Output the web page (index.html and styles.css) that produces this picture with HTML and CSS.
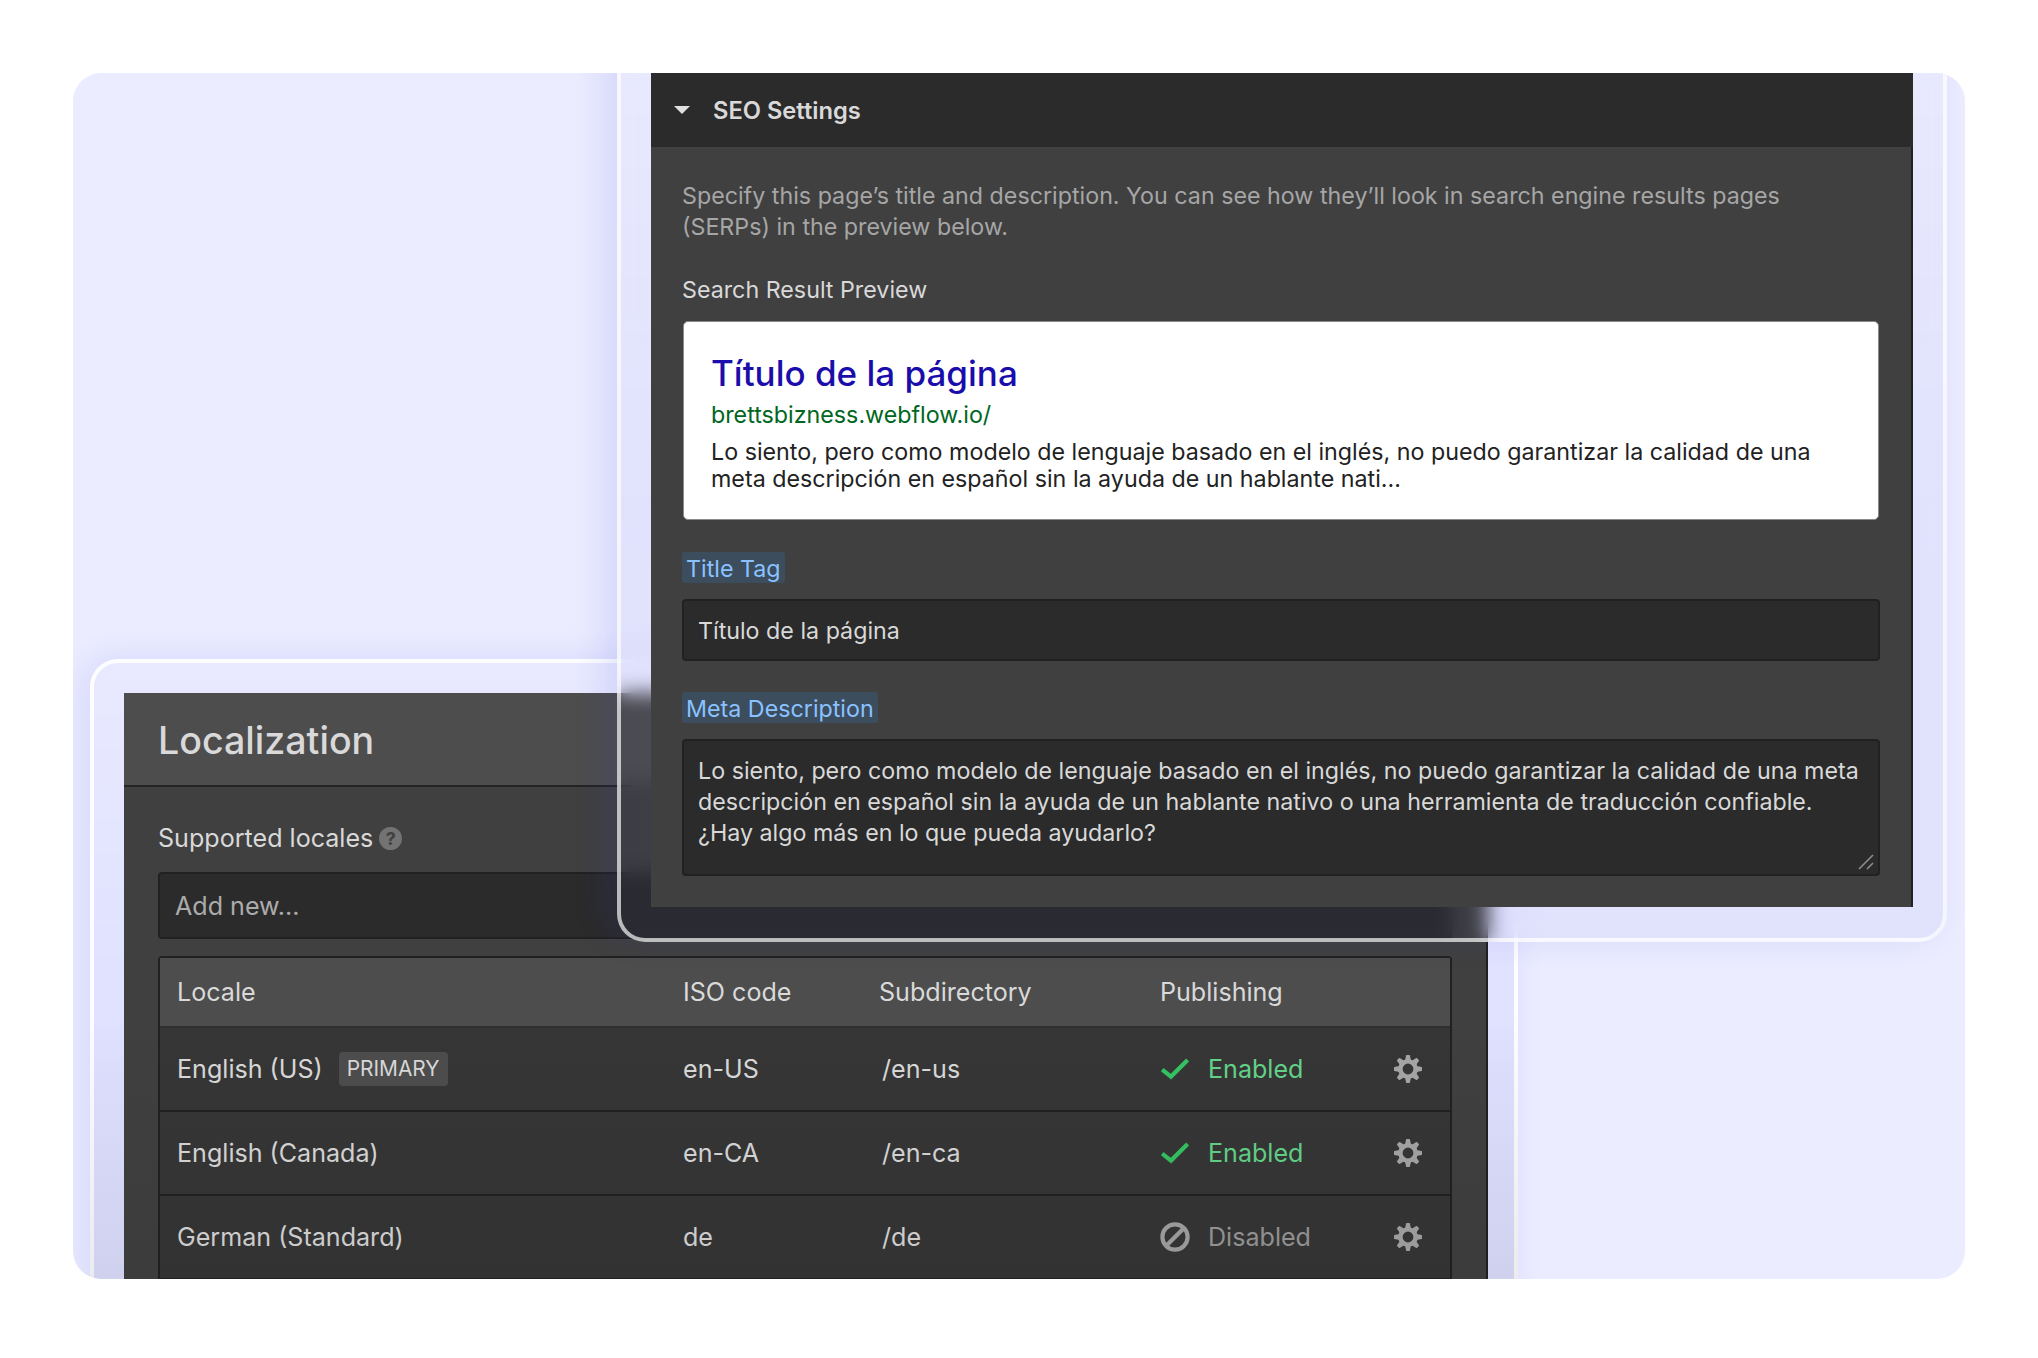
FILE: index.html
```html
<!DOCTYPE html>
<html lang="en">
<head>
    <meta charset="UTF-8">
    <title>Localization</title>
    <link rel="stylesheet" href="styles.css">
</head>
<body>
    <svg width="0" height="0" class="sprite">
        <symbol id="check" viewBox="0 0 30 30">
            <path d="M2.2 15.6 L11 22.6 L27.6 6" fill="none" stroke="#35c463" stroke-width="4.2"/>
        </symbol>
        <symbol id="ban" viewBox="0 0 30 30">
            <circle cx="15" cy="15" r="12.6" fill="none" stroke="#a3a3a3" stroke-width="4.2"/>
            <path d="M6.5 23.5 L23.5 6.5" stroke="#a3a3a3" stroke-width="4.2"/>
        </symbol>
        <symbol id="gear" viewBox="-14 -14 28 28">
            <circle r="7.6" fill="none" stroke="#a6a6a6" stroke-width="4.4"/>
            <g id="teeth" fill="#a6a6a6">
                <path id="tooth" d="M-3 -8.5 L-1.9 -13.6 Q-1.8 -14 -1.4 -14 L1.4 -14 Q1.8 -14 1.9 -13.6 L3 -8.5 Z"/>
                <use href="#tooth" transform="rotate(45)"/>
                <use href="#tooth" transform="rotate(90)"/>
                <use href="#tooth" transform="rotate(135)"/>
                <use href="#tooth" transform="rotate(180)"/>
                <use href="#tooth" transform="rotate(225)"/>
                <use href="#tooth" transform="rotate(270)"/>
                <use href="#tooth" transform="rotate(315)"/>
            </g>
        </symbol>
    </svg>

    <div class="canvas">
        <!-- Localization window -->
        <div class="glass glass-locales">
            <div class="panel locales">
                <h1>Localization</h1>
                <div class="locales-body">
                    <div class="label">Supported locales <span class="help">?</span></div>
                    <div class="add-new">Add new...</div>
                    <div class="table">
                        <div class="row head">
                            <span>Locale</span>
                            <span>ISO code</span>
                            <span>Subdirectory</span>
                            <span>Publishing</span>
                        </div>
                        <div class="row">
                            <span class="name">English (US) <span class="badge">PRIMARY</span></span>
                            <span>en-US</span>
                            <span class="dir">/en-us</span>
                            <span class="status on"><svg><use href="#check"/></svg>Enabled</span>
                            <svg class="gear"><use href="#gear"/></svg>
                        </div>
                        <div class="row">
                            <span class="name">English (Canada)</span>
                            <span>en-CA</span>
                            <span class="dir">/en-ca</span>
                            <span class="status on"><svg><use href="#check"/></svg>Enabled</span>
                            <svg class="gear"><use href="#gear"/></svg>
                        </div>
                        <div class="row">
                            <span class="name">German (Standard)</span>
                            <span>de</span>
                            <span class="dir">/de</span>
                            <span class="status off"><svg><use href="#ban"/></svg>Disabled</span>
                            <svg class="gear"><use href="#gear"/></svg>
                        </div>
                    </div>
                </div>
            </div>
        </div>

        <!-- SEO settings window -->
        <div class="glass glass-seo">
            <div class="panel seo">
                <div class="seo-head">
                    <svg class="arrow" viewBox="0 0 16 8"><path d="M0 0H16L8 8Z" fill="#e0e0e0"/></svg>
                    <h2>SEO Settings</h2>
                </div>
                <div class="seo-body">
                    <p class="intro">Specify this page’s title and description. You can see how they’ll look in search engine results pages<br>(SERPs) in the preview below.</p>
                    <div class="preview-label">Search Result Preview</div>
                    <div class="preview">
                        <div class="preview-title">Título de la página</div>
                        <div class="preview-url">brettsbizness.webflow.io/</div>
                        <div class="preview-text">Lo siento, pero como modelo de lenguaje basado en el inglés, no puedo garantizar la calidad de una<br>meta descripción en español sin la ayuda de un hablante nati...</div>
                    </div>
                    <div class="tag">Title Tag</div>
                    <div class="field">Título de la página</div>
                    <div class="tag">Meta Description</div>
                    <div class="field area">Lo siento, pero como modelo de lenguaje basado en el inglés, no puedo garantizar la calidad de una meta<br>descripción en español sin la ayuda de un hablante nativo o una herramienta de traducción confiable.<br>¿Hay algo más en lo que pueda ayudarlo?
                        <svg class="grip" viewBox="0 0 16 16"><path d="M1 15L15 1M9 15L15 9" stroke="#8c8c8c" stroke-width="1.6"/></svg>
                    </div>
                </div>
            </div>
        </div>
    </div>
</body>
</html>
```
FILE: styles.css
```css
* {
    box-sizing: border-box;
}
body {
    margin: 0;
    padding: 73px;
    background: #fff;
    font-family: Inter, "Liberation Sans", sans-serif;
    color: #d9d9d9;
}
h1, h2, p {
    margin: 0;
    font-weight: 400;
}
.sprite {
    position: absolute;
}
.canvas {
    position: relative;
    width: 1892px;
    height: 1206px;
    overflow: hidden;
    border-radius: 28px;
    background: #ebecff;
}

/* glass frames round the windows */
.glass {
    position: absolute;
    border: 4px solid rgba(255, 255, 255, 0.9);
    border-radius: 28px;
}
.glass-locales {
    left: 17px;
    top: 586px;
    width: 1428px;
    height: 700px;
    padding: 30px 26px 0 30px;
    background: linear-gradient(rgba(40, 40, 255, 0.01), rgba(40, 40, 255, 0.06) 60%);
    box-shadow: -8px 0 32px rgba(50, 60, 230, 0.11);
}
.glass-locales::after {
    content: "";
    position: absolute;
    inset: 50% -4px 0 -4px;
    background: linear-gradient(transparent, rgba(0, 0, 0, 0.09));
}
.glass-seo {
    left: 544px;
    top: -44px;
    width: 1330px;
    height: 913px;
    padding: 40px 30px 0 30px;
    border-color: rgba(255, 255, 255, 0.68);
    background: linear-gradient(rgba(40, 40, 200, 0.01), rgba(40, 40, 200, 0.05) 60%);
    backdrop-filter: blur(10px);
    box-shadow: -12px -4px 34px rgba(50, 60, 210, 0.12);
}
.panel {
    background: #404040;
    border-right: 2px solid #212121;
}

/* localization */
.locales {
    height: 640px;
    font-size: 25.1px;
}
.locales h1 {
    height: 94px;
    padding: 2px 0 0 34px;
    border-bottom: 2px solid #242424;
    background: #4d4d4d;
    font-size: 37.6px;
    font-weight: 500;
    line-height: 92px;
}
.locales-body {
    padding: 35px 34px 0;
}
.label {
    display: flex;
    align-items: center;
    height: 32px;
}
.help {
    width: 23px;
    height: 23px;
    margin-left: 6px;
    border-radius: 50%;
    background: #737373;
    color: #404040;
    font-size: 18px;
    font-weight: 700;
    line-height: 23px;
    text-align: center;
}
.add-new {
    height: 67px;
    margin: 18px 0 17px;
    padding-left: 15px;
    border: 2px solid #212121;
    border-radius: 4px;
    background: #2b2b2b;
    color: #ababab;
    line-height: 64px;
}
.table {
    border: 2px solid #212121;
    border-radius: 4px 4px 0 0;
    background: #363636;
}
.row {
    display: grid;
    grid-template-columns: 506px 196px 281px 1fr 28px;
    align-items: center;
    height: 84px;
    padding: 0 28px 0 17px;
    border-bottom: 2px solid #212121;
}
.row.head {
    height: 70px;
    padding-bottom: 1px;
    border-color: #303030;
    background: #4d4d4d;
    grid-template-columns: 506px 196px 281px 1fr;
}
.row:last-child {
    height: 82px;
    border-bottom: 0;
}
.name {
    display: flex;
    align-items: center;
}
.badge {
    height: 34px;
    margin-left: 16px;
    padding: 0 8px;
    border-radius: 4px;
    background: #4d4d4d;
    font-size: 20.9px;
    line-height: 34px;
}
.dir {
    padding-left: 3px;
}
.status {
    display: flex;
    align-items: center;
    gap: 18px;
}
.status svg {
    width: 30px;
    height: 30px;
}
.on {
    color: #63d489;
}
.off {
    color: #999;
}
.gear {
    width: 28px;
    height: 28px;
}

/* seo settings */
.seo {
    height: 834px;
    font-size: 23.25px;
    line-height: 31px;
}
.seo-head {
    display: flex;
    align-items: center;
    height: 74px;
    margin-right: -2px;
    padding-left: 23px;
    background: #2b2b2b;
}
.arrow {
    width: 16px;
    height: 8px;
    margin-right: 23px;
}
.seo-head h2 {
    font-size: 23.7px;
    font-weight: 600;
}
.seo-body {
    padding: 33px 31px 0;
}
.intro {
    color: #a6a6a6;
}
.preview-label {
    margin-top: 32px;
}
.preview {
    height: 199px;
    margin: 16px 1px 32px;
    padding: 30px 27px 0;
    border: 1px solid #8a8a8a;
    border-radius: 5px;
    background: #fff;
    color: #222;
}
.preview-title {
    color: #1a0dab;
    font-size: 35px;
    font-weight: 500;
    line-height: 42px;
}
.preview-url {
    margin: 6px 0 8px;
    color: #006621;
    line-height: 30px;
}
.preview-text {
    line-height: 27px;
}
.tag {
    width: fit-content;
    padding: 2px 4px 0;
    border-radius: 3px;
    background: #3c4d5e;
    color: #8ac2ff;
    line-height: 29px;
}
.field {
    position: relative;
    height: 62px;
    margin: 16px 0 31px;
    padding: 14px;
    border: 2px solid #212121;
    border-radius: 4px;
    background: #2b2b2b;
}
.area {
    height: 137px;
    white-space: nowrap;
}
.grip {
    position: absolute;
    right: 4px;
    bottom: 4px;
    width: 16px;
    height: 16px;
}
```
